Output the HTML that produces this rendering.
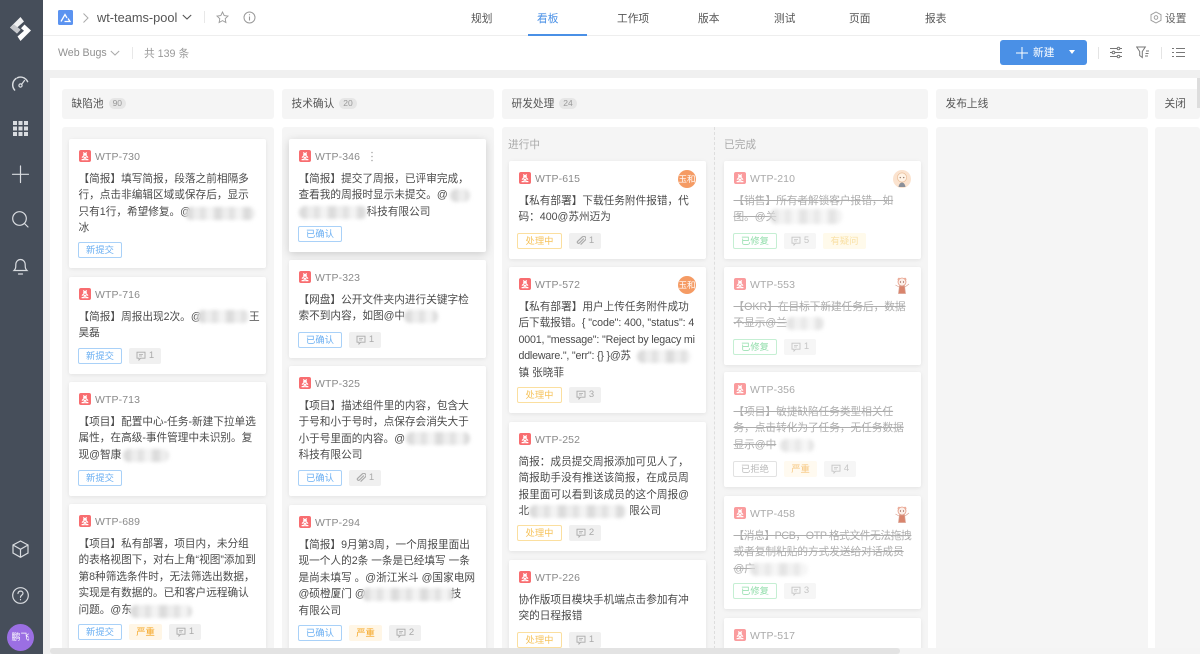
<!DOCTYPE html>
<html lang="zh"><head><meta charset="utf-8"><title>wt-teams-pool</title>
<style>
*{box-sizing:border-box}
html,body{margin:0;padding:0;width:1200px;height:654px;overflow:hidden;background:#fff}
#w{position:absolute;left:0;top:0;width:1200px;height:654px;overflow:hidden;background:#fff;filter:blur(.3px)}
body{position:relative;font-family:"Liberation Sans","Noto Sans CJK SC",sans-serif;color:#444;font-size:10.65px}
.a{position:absolute;white-space:nowrap}
.nav{position:absolute;top:11px;font-size:10.7px;line-height:16px;color:#555;white-space:nowrap}
.hd{position:absolute;top:89px;height:30px;background:#f5f5f5;border-radius:3px;line-height:31px;padding-left:9.5px;font-size:10.7px;color:#555;white-space:nowrap}
.hd i{font-style:normal;display:inline-block;background:#e6e6e6;border-radius:7px;height:11px;line-height:11px;font-size:8.5px;color:#999;padding:0 4px;margin-left:5px;vertical-align:1px}
.bd{position:absolute;top:127px;height:527px;background:#f5f5f5;border-radius:3px 3px 0 0}
.sub{position:absolute;top:138px;font-size:10.7px;line-height:14px;color:#aaa}
.c{position:absolute;width:197px;background:#fff;border-radius:2px;box-shadow:0 1px 4px rgba(0,0,0,.08);overflow:hidden}
.c>svg.g{position:absolute;left:9.5px;top:11px;width:12px;height:12px}
.id{position:absolute;left:26px;top:10.500px;line-height:14px;color:#8a8a8a;font-size:10.5px;letter-spacing:.1px}
.x{position:absolute;left:9.5px;top:32px;line-height:16.4px;color:#4a4a4a;white-space:nowrap;font-size:10.65px}
.d .x{color:#adadad;text-decoration:line-through}
.d .id{color:#aaa}
.d svg.g{opacity:.68}
.ts{position:absolute;left:9px;bottom:10.5px;display:flex;gap:7px;height:16px}
.t{height:16px;line-height:14px;font-size:9.3px;text-align:center;border-radius:2px;border:1px solid;width:44px;background:#fff;white-space:nowrap}
.bl{color:#69aef2;border-color:#a9d1f8}
.or{color:#f6c35b;border-color:#fbdf9f;width:45px}
.gn{color:#8fdda9;border-color:#c5efd3}
.rj{color:#bbb;border-color:#e2e2e2}
.sv{background:#fff6e6;border:0;color:#f5a623;width:33px;line-height:16px}
.d .sv{color:#f7c77f;background:#fffaf0}
.q{background:#fffaeb;border:0;color:#f9e0a4;width:43px;line-height:16px}
.m{background:#f0f0f0;border:0;color:#aaa;width:32px;line-height:16px;display:flex;align-items:center;justify-content:center;gap:3px;font-size:9.5px}
.d .m{background:#f6f6f6;color:#c6c6c6}
.m svg{width:10px;height:10px}
.b{position:absolute;height:13px;background:repeating-linear-gradient(90deg,#dcdcdc 0 8px,#eeeeee 8px 15px,#e2e2e2 15px 21px,#f3f3f3 21px 29px);filter:blur(1.8px);border-radius:6px}
.d .b{opacity:.75}
.av{position:absolute;right:10px;top:9px;width:18px;height:18px;border-radius:50%;background:#f59b64;color:#fff;font-size:8.5px;line-height:18px;text-align:center}
.pic{position:absolute;right:10px;top:9px;width:18px;height:18px}
</style></head><body>
<svg width="0" height="0" style="position:absolute"><defs>
<symbol id="bug" viewBox="0 0 12 12"><rect width="12" height="12" rx="2" fill="#f86d70"/><path d="M4.3 2.4 6 4 7.7 2.4M4.2 4.4h3.6M6 4.4 3 7.6M6 4.4l3 3.2M2.6 9.6h2.6V7.4h1.6v2.2h2.6" fill="none" stroke="#fff" stroke-width="1.2"/></symbol>
<symbol id="cm" viewBox="0 0 10 10"><path d="M1 1.2h8v6H4.6L3 9V7.2H1z" fill="none" stroke="currentColor" stroke-width=".9"/><path d="M3 3.4h4M3 5h3" stroke="currentColor" stroke-width=".7"/></symbol>
<symbol id="at" viewBox="0 0 10 10"><path d="M7.8 2.6 3.4 7a1.2 1.2 0 0 1-1.7-1.7L6.3 1a2.1 2.1 0 0 1 3 3L4.6 8.6" fill="none" stroke="currentColor" stroke-width="1.2"/></symbol>
<symbol id="f1" viewBox="0 0 18 18"><circle cx="9" cy="9" r="9" fill="#fbe3cf"/><circle cx="9" cy="7.5" r="4.6" fill="#fff3e6" stroke="#e9bd98" stroke-width=".7"/><circle cx="7.3" cy="7.6" r=".7" fill="#9a8172"/><circle cx="10.7" cy="7.6" r=".7" fill="#9a8172"/><path d="M5.5 17c.5-3 2-4.5 3.500-4.500S12 14 12.500 17z" fill="#8a8f99"/></symbol>
<symbol id="f2" viewBox="0 0 18 18"><path d="M4 3.500 6 1.500 7.500 3.500M10.500 3.500 12 1.500 14 3.500" fill="#eaa28e"/><circle cx="9" cy="6" r="4" fill="#fbeee8" stroke="#e59a84" stroke-width=".8"/><circle cx="7.500" cy="6" r=".6" fill="#8a4a3a"/><circle cx="10.500" cy="6" r=".6" fill="#8a4a3a"/><path d="M6.500 10h5l1 7.500h-7zM12 11l4-3M6 11 2.500 9" fill="#d9846c" stroke="#d9a090" stroke-width=".7"/></symbol>
</defs></svg>
<div id="w">
<!-- sidebar -->
<div class="a" style="left:0;top:0;width:43px;height:654px;background:#464e5a"></div>
<svg class="a" style="left:0;top:0" width="43" height="654" fill="none" stroke="#d9dce0" stroke-width="1.2" stroke-linecap="round">
<path d="M20.500 17 10 27.500l7 6 3.500-3.800-3-2.500L24 21.500z" fill="#fff" stroke="none" opacity=".92"/>
<path d="M10 27.500l7 6 3.500-3.800-3-2.500-3.500-2.800z" fill="#c6c8cc" stroke="none"/>
<path d="M20.500 41 31 30.500l-6.500-6-3.500 3.800 3 2.500-6.500 5.700z" fill="#fff" stroke="none"/>
<path d="M14.600 90a7.800 7.800 0 1 1 11.800 0" stroke-width="1.500" stroke-dasharray="13 1.500 12"/><circle cx="20.500" cy="85.500" r="1.600"/><path d="M21.500 84.500 24.500 80.500"/>
<g fill="#d9dce0" stroke="none"><rect x="13" y="121" width="4" height="4"/><rect x="18.500" y="121" width="4" height="4"/><rect x="24" y="121" width="4" height="4"/><rect x="13" y="126.500" width="4" height="4"/><rect x="18.500" y="126.500" width="4" height="4"/><rect x="24" y="126.500" width="4" height="4"/><rect x="13" y="132" width="4" height="4"/><rect x="18.500" y="132" width="4" height="4"/><rect x="24" y="132" width="4" height="4"/></g>
<path d="M12.500 174.300h16M20.500 166v16.500"/>
<circle cx="19.500" cy="218.500" r="6.800"/><path d="M24.500 223.500 28 227"/>
<path d="M14 270.500c1.700-1.600 1.800-3 1.800-5.800 0-3 2-5.200 4.700-5.200s4.700 2.200 4.700 5.200c0 2.800.1 4.200 1.800 5.800zM18.500 274h4"/>
<path d="M20.500 541 13 545v8l7.500 4.300 7.500-4.300v-8zM13 545l7.500 4.300 7.500-4.300M20.500 549.300v8"/>
<circle cx="20.500" cy="595.500" r="7.800"/><path d="M18 593.500c.3-3.300 5-3 5-.2 0 1.900-2.500 1.800-2.500 4M20.500 599.500v.3"/>
</svg>
<div class="a" style="left:7px;top:623.500px;width:27px;height:27px;border-radius:50%;background:#9b6fe3;color:#fff;font-size:9px;line-height:27px;text-align:center">鹏飞</div>

<!-- top bar -->
<div class="a" style="left:43px;top:35px;width:1157px;height:1px;background:#eee"></div>
<svg class="a" style="left:58px;top:10px" width="15" height="15"><rect width="15" height="15" rx="1.500" fill="#5b93f0"/><path d="M3 11.500 7 4.500l2 3.500M6.500 11.500h5.500L10 8.500" fill="none" stroke="#fff" stroke-width="1.300"/></svg>
<svg class="a" style="left:82px;top:12px" width="8" height="12"><path d="M1.500 1.500 6 6l-4.500 4.500" fill="none" stroke="#aaa"/></svg>
<div class="a" style="left:97px;top:9px;font-size:12.8px;line-height:18px;color:#555">wt-teams-pool</div>
<svg class="a" style="left:182px;top:14px" width="10" height="7"><path d="M.8 1 5 5l4.200-4" fill="none" stroke="#555" stroke-width="1.100"/></svg>
<div class="a" style="left:204px;top:11px;width:1px;height:12px;background:#e8e8e8"></div>
<svg class="a" style="left:216px;top:11px" width="13" height="13"><path d="M6.500 1 8.200 4.600l3.800.5-2.800 2.600.7 3.800-3.400-1.900-3.400 1.900.7-3.800L1 5.100l3.800-.5z" fill="none" stroke="#999" stroke-width=".9"/></svg>
<svg class="a" style="left:243px;top:11px" width="13" height="13"><circle cx="6.500" cy="6.500" r="5.500" fill="none" stroke="#999"/><path d="M6.500 5.500v4M6.500 3.300v1" stroke="#999" stroke-width="1.100"/></svg>
<div class="nav" style="left:471px">规划</div>
<div class="nav" style="left:537px;color:#4a90e6">看板</div>
<div class="a" style="left:528px;top:34px;width:59px;height:2px;background:#4a90e6"></div>
<div class="nav" style="left:617px">工作项</div>
<div class="nav" style="left:698px">版本</div>
<div class="nav" style="left:774px">测试</div>
<div class="nav" style="left:849px">页面</div>
<div class="nav" style="left:925px">报表</div>
<svg class="a" style="left:1150px;top:11px" width="12" height="13"><path d="M6 1 11 3.700v5.600L6 12 1 9.300V3.700z" fill="none" stroke="#999" stroke-width=".9"/><circle cx="6" cy="6.500" r="1.800" fill="none" stroke="#999" stroke-width=".9"/></svg>
<div class="nav" style="left:1165px;color:#666">设置</div>

<!-- second bar -->
<div class="a" style="left:58px;top:46px;line-height:15px;color:#909090;font-size:10.6px">Web Bugs</div>
<svg class="a" style="left:110px;top:50px" width="10" height="7"><path d="M.8 1 5 5l4.200-4" fill="none" stroke="#aaa"/></svg>
<div class="a" style="left:132px;top:47px;width:1px;height:12px;background:#e8e8e8"></div>
<div class="a" style="left:144px;top:46px;line-height:16px;color:#999;font-size:10.7px">共 139 条</div>
<div class="a" style="left:1000px;top:40px;width:87px;height:25px;background:#4a90e6;border-radius:3px"></div>
<svg class="a" style="left:1016px;top:47px" width="12" height="12"><path d="M0 6h12M6 0v12" stroke="#fff" stroke-width="1"/></svg>
<div class="a" style="left:1033px;top:45px;line-height:17px;color:#fff;font-size:10.7px">新建</div>
<svg class="a" style="left:1068px;top:50px" width="8" height="5"><path d="M1 0h6L4 4z" fill="#fff"/></svg>
<div class="a" style="left:1098px;top:47px;width:1px;height:12px;background:#e4e4e4"></div>
<svg class="a" style="left:1110px;top:46px" width="12" height="13" fill="none" stroke="#777"><path d="M0 2.500h7M10 2.500h2M0 6.500h2M5 6.500h7M0 10.500h7M10 10.500h2"/><circle cx="8.500" cy="2.500" r="1.300"/><circle cx="3.500" cy="6.500" r="1.300"/><circle cx="8.500" cy="10.500" r="1.300"/></svg>
<svg class="a" style="left:1136px;top:46px" width="14" height="13" fill="none" stroke="#777"><path d="M.7 1h8.600L6.300 5.500V11.500L3.700 9.500V5.500zM10 5h3M9.500 7.500h3M9 10h3"/></svg>
<div class="a" style="left:1161px;top:47px;width:1px;height:12px;background:#e4e4e4"></div>
<svg class="a" style="left:1172px;top:46px" width="13" height="13" stroke="#777"><path d="M0 2.500h2M4 2.500h9M0 6.500h2M4 6.500h9M0 10.500h2M4 10.500h9"/></svg>

<!-- background bands -->
<div class="a" style="left:43px;top:70px;width:1157px;height:8px;background:#f0f0f0"></div>
<div class="a" style="left:43px;top:70px;width:7px;height:584px;background:#f0f0f0"></div>

<!-- column headers -->
<div class="hd" style="left:62px;width:212px">缺陷池<i>90</i></div>
<div class="hd" style="left:282px;width:212px">技术确认<i>20</i></div>
<div class="hd" style="left:502px;width:426px">研发处理<i>24</i></div>
<div class="hd" style="left:936px;width:212px">发布上线</div>
<div class="hd" style="left:1155px;width:45px">关闭</div>
<div class="bd" style="left:62px;width:212px"></div>
<div class="bd" style="left:282px;width:212px"></div>
<div class="bd" style="left:502px;width:426px"></div>
<div class="bd" style="left:936px;width:212px"></div>
<div class="bd" style="left:1155px;width:45px"></div>
<div class="a" style="left:714px;top:127px;height:527px;border-left:1px dashed #dedede"></div>
<div class="sub" style="left:508px">进行中</div>
<div class="sub" style="left:724px">已完成</div>

<!-- col 1 -->
<div class="c" style="left:69px;top:139px;height:129px"><svg class="g"><use href="#bug"/></svg><div class="id">WTP-730</div>
<div class="x">【简报】填写简报，段落之前相隔多<br>行，点击非编辑区域或保存后，显示<br>只有1行，希望修复。@<br>冰</div><div class="b" style="left:116px;top:68px;width:70px"></div>
<div class="ts"><div class="t bl">新提交</div></div></div>
<div class="c" style="left:69px;top:277px;height:97px"><svg class="g"><use href="#bug"/></svg><div class="id">WTP-716</div>
<div class="x">【简报】周报出现2次。@<br>昊磊</div><div class="b" style="left:128px;top:33px;width:52px"></div><div class="x" style="left:180px">王</div>
<div class="ts"><div class="t bl">新提交</div><div class="t m"><svg><use href="#cm"/></svg>1</div></div></div>
<div class="c" style="left:69px;top:382px;height:114px"><svg class="g"><use href="#bug"/></svg><div class="id">WTP-713</div>
<div class="x">【项目】配置中心-任务-新建下拉单选<br>属性，在高级-事件管理中未识别。复<br>现@智康</div><div class="b" style="left:54px;top:67px;width:46px"></div>
<div class="ts"><div class="t bl">新提交</div></div></div>
<div class="c" style="left:69px;top:504px;height:146px"><svg class="g"><use href="#bug"/></svg><div class="id">WTP-689</div>
<div class="x">【项目】私有部署，项目内，未分组<br>的表格视图下，对右上角“视图”添加到<br>第8种筛选条件时，无法筛选出数据，<br>实现是有数据的。已和客户远程确认<br>问题。@东</div><div class="b" style="left:61px;top:101px;width:62px"></div>
<div class="ts"><div class="t bl">新提交</div><div class="t sv">严重</div><div class="t m"><svg><use href="#cm"/></svg>1</div></div></div>

<!-- col 2 -->
<div class="c" style="left:289px;top:139px;height:113px;box-shadow:0 2px 9px rgba(0,0,0,.17)"><svg class="g"><use href="#bug"/></svg><div class="id">WTP-346</div><svg class="a" style="left:81px;top:12px" width="4" height="11" fill="#aaa"><circle cx="2" cy="1.500" r=".8"/><circle cx="2" cy="5.500" r=".8"/><circle cx="2" cy="9.500" r=".8"/></svg>
<div class="x">【简报】提交了周报，已评审完成，<br>查看我的周报时显示未提交。@<br><span style="margin-left:68px">科技有限公司</span></div><div class="b" style="left:161px;top:50px;width:20px"></div><div class="b" style="left:10px;top:67px;width:68px"></div>
<div class="ts"><div class="t bl">已确认</div></div></div>
<div class="c" style="left:289px;top:260px;height:98px"><svg class="g"><use href="#bug"/></svg><div class="id">WTP-323</div>
<div class="x">【网盘】公开文件夹内进行关键字检<br>索不到内容，如图@中</div><div class="b" style="left:115px;top:50px;width:34px"></div>
<div class="ts"><div class="t bl">已确认</div><div class="t m"><svg><use href="#cm"/></svg>1</div></div></div>
<div class="c" style="left:289px;top:366px;height:130px"><svg class="g"><use href="#bug"/></svg><div class="id">WTP-325</div>
<div class="x">【项目】描述组件里的内容，包含大<br>于号和小于号时，点保存会消失大于<br>小于号里面的内容。@<br>科技有限公司</div><div class="b" style="left:117px;top:66px;width:64px"></div>
<div class="ts"><div class="t bl">已确认</div><div class="t m"><svg><use href="#at"/></svg>1</div></div></div>
<div class="c" style="left:289px;top:505px;height:146px"><svg class="g"><use href="#bug"/></svg><div class="id">WTP-294</div>
<div class="x">【简报】9月第3周，一个周报里面出<br>现一个人的2条 一条是已经填写 一条<br>是尚未填写 。@浙江米斗 @国家电网<br>@硕橙厦门 @<span style="margin-left:85px">技</span><br>有限公司</div><div class="b" style="left:73px;top:83px;width:92px"></div>
<div class="ts"><div class="t bl">已确认</div><div class="t sv">严重</div><div class="t m"><svg><use href="#cm"/></svg>2</div></div></div>

<!-- col 3 in progress -->
<div class="c" style="left:509px;top:161px;height:98px"><svg class="g"><use href="#bug"/></svg><div class="id">WTP-615</div><div class="av">玉和</div>
<div class="x">【私有部署】下载任务附件报错，代<br>码：400@苏州迈为</div>
<div class="ts" style="left:8px"><div class="t or">处理中</div><div class="t m"><svg><use href="#at"/></svg>1</div></div></div>
<div class="c" style="left:509px;top:267px;height:146px"><svg class="g"><use href="#bug"/></svg><div class="id">WTP-572</div><div class="av">玉和</div>
<div class="x">【私有部署】用户上传任务附件成功<br><span style="letter-spacing:-.08px">后下载报错。{ "code": 400, "status": 4</span><br><span style="letter-spacing:-.16px">0001, "message": "Reject by legacy mi</span><br><span style="letter-spacing:-.2px">ddleware.", "err": {} }@苏</span><br>镇 张晓菲</div><div class="b" style="left:128px;top:83px;width:54px"></div>
<div class="ts" style="left:8px"><div class="t or">处理中</div><div class="t m"><svg><use href="#cm"/></svg>3</div></div></div>
<div class="c" style="left:509px;top:422px;height:129px"><svg class="g"><use href="#bug"/></svg><div class="id">WTP-252</div>
<div class="x">简报：成员提交周报添加可见人了，<br>简报助手没有推送该简报，在成员周<br>报里面可以看到该成员的这个周报@<br>北<span style="margin-left:100px">限公司</span></div><div class="b" style="left:20px;top:83px;width:97px"></div>
<div class="ts" style="left:8px"><div class="t or">处理中</div><div class="t m"><svg><use href="#cm"/></svg>2</div></div></div>
<div class="c" style="left:509px;top:560px;height:98px"><svg class="g"><use href="#bug"/></svg><div class="id">WTP-226</div>
<div class="x">协作版项目模块手机端点击参加有冲<br>突的日程报错</div>
<div class="ts" style="left:8px;bottom:auto;top:71.500px"><div class="t or">处理中</div><div class="t m"><svg><use href="#cm"/></svg>1</div></div></div>

<!-- col 3 done -->
<div class="c d" style="left:724px;top:161px;height:98px"><svg class="g"><use href="#bug"/></svg><div class="id">WTP-210</div><svg class="pic"><use href="#f1"/></svg>
<div class="x">【销售】所有者解锁客户报错，如<br>图。@关</div><div class="b" style="left:46px;top:48px;width:72px;height:15px"></div>
<div class="ts"><div class="t gn">已修复</div><div class="t m"><svg><use href="#cm"/></svg>5</div><div class="t q">有疑问</div></div></div>
<div class="c d" style="left:724px;top:267px;height:98px"><svg class="g"><use href="#bug"/></svg><div class="id">WTP-553</div><svg class="pic"><use href="#f2"/></svg>
<div class="x">【OKR】在目标下新建任务后，数据<br>不显示@兰</div><div class="b" style="left:62px;top:50px;width:38px"></div>
<div class="ts"><div class="t gn">已修复</div><div class="t m"><svg><use href="#cm"/></svg>1</div></div></div>
<div class="c d" style="left:724px;top:372px;height:115px"><svg class="g"><use href="#bug"/></svg><div class="id">WTP-356</div>
<div class="x">【项目】敏捷缺陷任务类型相关任<br>务，点击转化为了任务，无任务数据<br>显示@中</div><div class="b" style="left:56px;top:67px;width:34px"></div>
<div class="ts"><div class="t rj">已拒绝</div><div class="t sv">严重</div><div class="t m"><svg><use href="#cm"/></svg>4</div></div></div>
<div class="c d" style="left:724px;top:496px;height:113px"><svg class="g"><use href="#bug"/></svg><div class="id">WTP-458</div><svg class="pic"><use href="#f2"/></svg>
<div class="x"><span style="letter-spacing:-.35px">【消息】PCB，OTP 格式文件无法拖拽</span><br>或者复制粘贴的方式发送给对话成员<br>@广</div><div class="b" style="left:26px;top:67px;width:58px"></div>
<div class="ts"><div class="t gn">已修复</div><div class="t m"><svg><use href="#cm"/></svg>3</div></div></div>
<div class="c d" style="left:724px;top:618px;height:60px"><svg class="g"><use href="#bug"/></svg><div class="id">WTP-517</div></div>

<!-- scrollbars -->
<div class="a" style="left:50px;top:648px;width:1150px;height:6px;background:#f4f4f4"></div>
<div class="a" style="left:50px;top:648px;width:850px;height:6px;background:#e3e3e3;border-radius:3px"></div>
<div class="a" style="left:1197px;top:78px;width:3px;height:30px;background:#ddd"></div>
</div>
</body></html>
